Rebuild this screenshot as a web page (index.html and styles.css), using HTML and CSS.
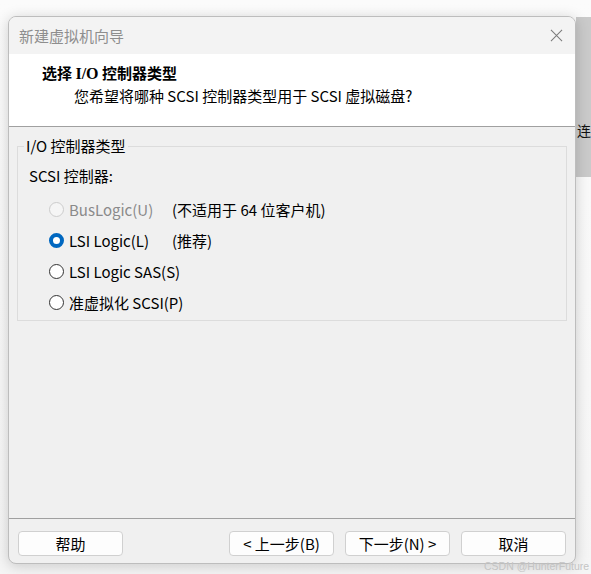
FILE: index.html
```html
<!DOCTYPE html>
<html lang="zh-CN">
<head>
  <meta charset="UTF-8" />
  <meta name="viewport" content="width=device-width, initial-scale=1.0"/>
  <title>新建虚拟机向导</title>
  <link rel="stylesheet" href="styles.css">
</head>
<body>
  <div class="behind">
    <span class="behind-text">连</span>
  </div>

  <div class="window">
    <div class="titlebar">
      <span class="title">新建虚拟机向导</span>
      <svg class="close" width="14" height="14" viewBox="0 0 14 14">
        <path d="M1 1 L13 13 M13 1 L1 13" stroke="#7a7a7a" stroke-width="1.1" fill="none"/>
      </svg>
    </div>

    <div class="header">
      <div class="header-title">选择 <span class="serif">I/O</span> 控制器类型</div>
      <div class="header-sub">您希望将哪种 SCSI 控制器类型用于 SCSI 虚拟磁盘?</div>
    </div>

    <div class="content">
      <fieldset class="group">
        <legend>I/O 控制器类型</legend>
        <div class="group-label">SCSI 控制器:</div>

        <label class="option disabled">
          <input type="radio" name="scsi" disabled>
          <span class="opt-name">BusLogic(U)</span>
          <span class="opt-note">(不适用于 64 位客户机)</span>
        </label>
        <label class="option">
          <input type="radio" name="scsi" checked>
          <span class="opt-name">LSI Logic(L)</span>
          <span class="opt-note">(推荐)</span>
        </label>
        <label class="option">
          <input type="radio" name="scsi">
          <span class="opt-name">LSI Logic SAS(S)</span>
        </label>
        <label class="option">
          <input type="radio" name="scsi">
          <span class="opt-name">准虚拟化 SCSI(P)</span>
        </label>
      </fieldset>
    </div>

    <div class="footer">
      <button>帮助</button>
      <div class="spacer"></div>
      <button>&lt; 上一步(B)</button>
      <button>下一步(N) &gt;</button>
      <button>取消</button>
    </div>
  </div>

  <div class="watermark">CSDN @HunterFuture</div>
</body>
</html>
```

FILE: styles.css
```css
html, body {
  margin: 0;
  height: 100%;
}

body {
  position: relative;
  overflow: hidden;
  background: linear-gradient(to bottom, #fbfbfb 0, #f5f5f5 100%);
  font-family: "Noto Sans CJK SC", "Noto Sans", sans-serif;
  font-size: 15px;
  line-height: 20px;
  color: #000;
  padding: 16px 0 0 8px;
  box-sizing: border-box;
}

/* the other window peeking out on the right */
.behind {
  position: absolute;
  left: 576px;
  top: 17px;
  width: 15px;
  height: 160px;
  background: #cacaca;
  overflow: hidden;
}

.behind-text {
  position: absolute;
  left: 1px;
  top: 103px;
  font-size: 14px;
  color: #111;
}

.window {
  position: relative;
  width: 568px;
  height: 548px;
  box-sizing: border-box;
  border: 1px solid #bdbdbd;
  border-radius: 8px;
  background: #f0f0f0;
  box-shadow: 0 2px 14px rgba(0, 0, 0, 0.18);
  display: flex;
  flex-direction: column;
  overflow: hidden;
}

.titlebar {
  height: 37px;
  flex: none;
  background: #f3f3f3;
  display: flex;
  align-items: center;
  padding: 0 11px 0 10px;
}

.title {
  flex: 1;
  color: #8e8e8e;
  font-size: 15px;
}

.close {
  width: 13px;
  height: 13px;
  margin-right: 1px;
}

.header {
  height: 63px;
  flex: none;
  background: #fff;
  border-bottom: 1px solid #a0a0a0;
  padding: 9px 0 0 33px;
}

.header-title {
  font-weight: bold;
  height: 20px;
}

.serif {
  font-family: "Liberation Serif", "Noto Sans CJK SC", serif;
  font-size: 16px;
}

.header-sub {
  margin-top: 3px;
  padding-left: 32px;
}

.content {
  flex: 1;
  padding: 9px 8px 0 8px;
}

.group {
  margin: 0;
  padding: 0 0 2px 0;
  border: 1px solid #dcdcdc;
}

.group legend {
  margin-left: 6px;
  padding: 0 2px;
}

.group-label {
  padding-left: 11px;
  margin-top: 10px;
  margin-bottom: 8px;
}

.option {
  display: flex;
  align-items: center;
  height: 31px;
  padding-left: 31px;
}

.option input {
  appearance: none;
  -webkit-appearance: none;
  width: 15px;
  height: 15px;
  margin: 0 5px 0 0;
  border: 1px solid #333;
  border-radius: 50%;
  background: #fff;
  box-sizing: border-box;
  flex: none;
}

.option input:checked {
  border: 4px solid #0067c0;
  background: #fff;
}

.option input:disabled {
  border-color: #cccccc;
  background: #f5f5f5;
}

.opt-name {
  width: 103px;
  flex: none;
  white-space: nowrap;
}

.disabled .opt-name {
  color: #8a8a8a;
}

.footer {
  flex: none;
  border-top: 1px solid #a0a0a0;
  padding: 12px 9px 7px 9px;
  display: flex;
  gap: 11px;
}

.spacer {
  flex: 1;
}

button {
  width: 105px;
  height: 25px;
  padding: 0;
  font: inherit;
  font-size: 15px;
  color: #000;
  background: #fdfdfd;
  border: 1px solid #d0d0d0;
  border-radius: 4px;
}

.watermark {
  position: absolute;
  left: 484px;
  top: 556px;
  font-family: "Liberation Sans", sans-serif;
  font-size: 10.5px;
  color: #c4c4c4;
  white-space: nowrap;
}
```
